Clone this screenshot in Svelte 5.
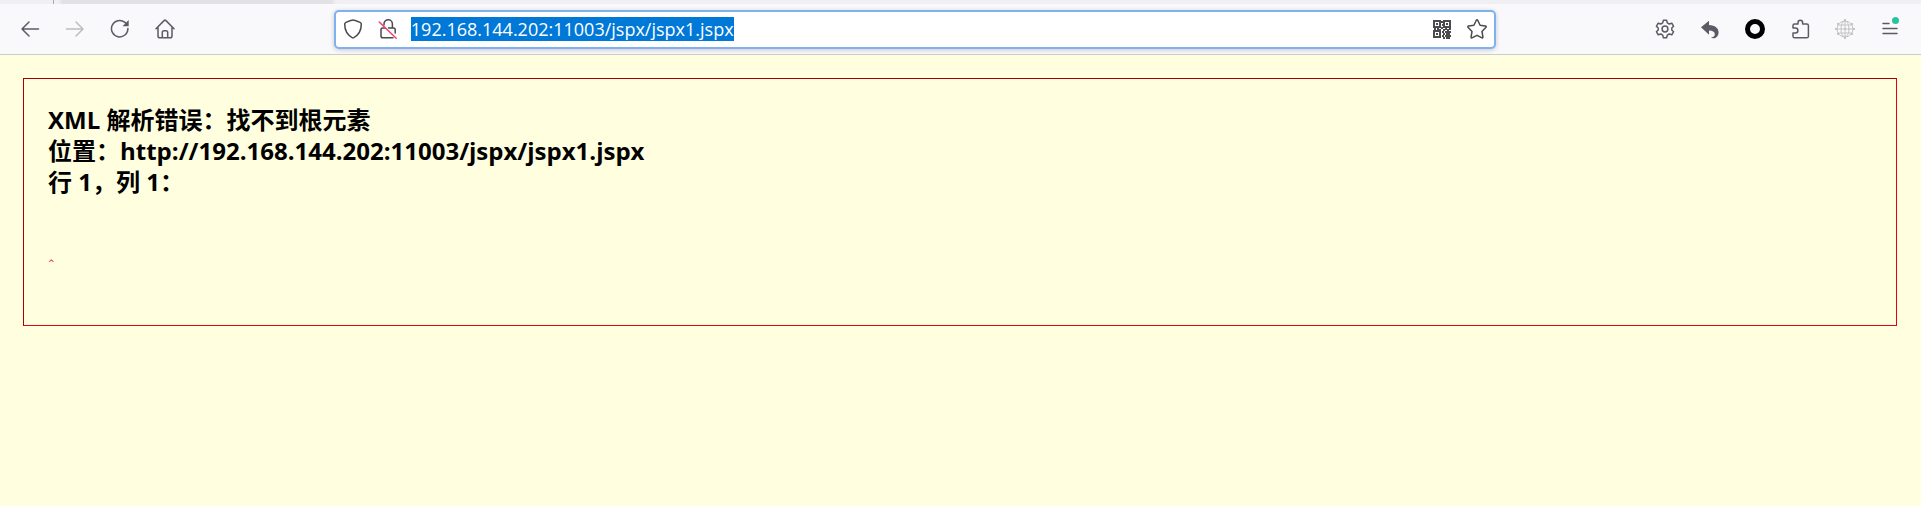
<script>
  import { onMount } from 'svelte';

  let address = $state('192.168.144.202:11003/jspx/jspx1.jspx');
  let field;

  // modules of the QR glyph that lie outside the three finder squares
  const dots = [
    [8, 1], [9, 4], [8, 7], [1, 8], [4, 8], [6, 9], [10, 9], [12, 8], [14, 9],
    [16, 8], [9, 11], [12, 11], [14, 11], [16, 11], [10, 13], [13, 13], [15, 13],
    [9, 15], [12, 15], [14, 15], [16, 15], [10, 17], [13, 17], [15, 17]
  ];

  onMount(() => {
    field.focus();
    field.select();
  });
</script>

<div class="tabs"><span class="divider"></span><span class="tab"></span></div>

<nav class="toolbar">
  <div class="group">
    <button aria-label="Back">
      <svg viewBox="0 0 20 20"><path d="M18.5 10H2M9 3L2 10l7 7" /></svg>
    </button>
    <button aria-label="Forward" class="off">
      <svg viewBox="0 0 20 20"><path d="M1.5 10H18M11 3l7 7-7 7" /></svg>
    </button>
    <button aria-label="Reload">
      <svg viewBox="0 0 20 20"><path d="M17.9 9.6A8.2 8.2 0 1 1 14.6 3.1L17 5.2" /><path class="solid" d="M18.7 1v6.2h-6.2z" /></svg>
    </button>
    <button aria-label="Home">
      <svg viewBox="0 0 20 20"><path d="M1 9.7L9.3 1.4q.7-.6 1.4 0L19 9.7M3 8.2v8.8q0 1.8 1.8 1.8h10.4q1.8 0 1.8-1.8V8.2M7.3 18.5v-5q0-1.8 1.7-1.8h2q1.7 0 1.7 1.8v5" /></svg>
    </button>
  </div>

  <div class="space"></div>

  <div class="address">
    <button aria-label="Tracking protection">
      <svg viewBox="0 0 20 20"><path d="M10 1.1Q11 1.1 17 3.4q1.3.5 1.3 1.7C18.3 12 15 16.4 10.8 18.7q-.8.4-1.6 0C5 16.4 1.7 12 1.7 5.1q0-1.2 1.3-1.7Q9 1.1 10 1.1z" /></svg>
    </button>
    <button aria-label="Connection not secure">
      <svg viewBox="0 0 20 20"><path d="M6 6V5a4.2 4.2 0 0 1 8.4 0v4h1.2q1.6 0 1.6 1.6V14M10.5 9H14M7 9H4.6Q3 9 3 10.6V17q0 1.8 1.8 1.8H15" /><path class="slash" d="M1.2 3l17 16.2" /></svg>
    </button>
    <input bind:this={field} bind:value={address} aria-label="Address" type="text" spellcheck="false" />
    <button aria-label="QR code">
      <svg viewBox="0 0 20 20">
        <path class="finder" d="M2 2h6v6H2zM12 2h6v6h-6zM2 12h6v6H2z" />
        <path class="solid" d="M4 4h2v2H4zM14 4h2v2h-2zM4 14h2v2H4z" />
        {#each dots as [x, y]}<rect class="solid" x={x + 1} y={y + 1} width="2" height="2" />{/each}
      </svg>
    </button>
    <button aria-label="Bookmark">
      <svg viewBox="0 0 20 20"><path d="M9.2 1.5q.8-1.3 1.6 0l2.3 4.8 5.2.8q1.5.3.5 1.5L15 12.5l.9 5.3q.1 1.6-1.3.9L10 16.300l-4.600 2.400q-1.400.7-1.300-.9l.9-5.300L1.200 8.600q-1-1.200.5-1.500l5.200-.8z" /></svg>
    </button>
  </div>

  <div class="space"></div>

  <div class="group">
    <button aria-label="Settings">
      <svg viewBox="0 0 20 20"><path d="M8.4 1.2h3.2l.7 2.7 1.9 1.1 2.6-.8 1.8 3.1L16.8 9v2l1.8 1.7-1.8 3.1-2.6-.8-1.9 1.1-.7 2.7H8.400l-.7-2.7L5.800 15l-2.600.8-1.800-3.100L3.200 11V9L1.400 7.300l1.800-3.100 2.600.8 1.900-1.100z" /><circle cx="10" cy="10" r="2.9" /></svg>
    </button>
    <button aria-label="Undo">
      <svg viewBox="0 0 20 20"><path class="solid" d="M9 1.8v4.100c6 .1 9.600 3.300 9.600 7.600 0 2.400-1.400 4.600-3.300 5.400-2.600.5-4 .2-4-.3 2.600-.6 3.700-1.800 3.500-3.600-.2-2-2.200-3.300-5.800-3.400v4.200L1 8.300z" /></svg>
    </button>
    <button aria-label="Proxy">
      <svg viewBox="0 0 20 20"><circle class="ring" cx="10" cy="10" r="7.5" /></svg>
    </button>
    <button aria-label="Extensions">
      <svg viewBox="0 0 20 20"><path d="M3 9V6.500Q3 5 4.500 5H8V3.500a2.300 2.300 0 0 1 4.600 0V5h4.200q1.600 0 1.600 1.600v10.600q0 1.600-1.600 1.600H4.600Q3 18.800 3 17.200V14h2.400a2.500 2.500 0 0 0 0-5z" /></svg>
    </button>
    <button aria-label="Network" class="faint">
      <svg viewBox="0 0 20 20"><circle cx="10" cy="10" r="8" /><ellipse cx="10" cy="10" rx="4" ry="8" /><path d="M10 1v18M1 10h18M3 6h14M3 14h14" /><path class="solid" d="M9 0h2v2H9zM9 18h2v2H9zM2 4h2v2H2zM16 4h2v2h-2zM2 14h2v2H2zM16 14h2v2h-2zM9 9h2v2H9zM0 9h2v2H0zM18 9h2v2h-2z" /></svg>
    </button>
    <button aria-label="Menu">
      <svg viewBox="0 0 20 20"><path d="M3 4.500h6M3 9.500h14M3 14.500h14" /></svg>
      <span class="badge"></span>
    </button>
  </div>
</nav>

<main>
  <p>XML 解析错误：找不到根元素<br />位置：http://192.168.144.202:11003/jspx/jspx1.jspx<br />行 1，列 1：</p>
  <pre>^</pre>
</main>

<style>
  :global(body) {
    margin: 0;
    background: #ffffdf;
    font-family: "Open Sans", "Noto Sans CJK SC", sans-serif;
  }
  .tabs {
    display: flex;
    height: 4px;
    overflow: hidden;
    background: #f0f0f4;
  }
  .divider {
    width: 1px;
    margin: 0 8px 0 53px;
    background: #aaaab2;
  }
  .tab {
    width: 270px;
    background: #e2e2e6;
    box-shadow: 0 0 4px #bbbbc2;
  }
  .toolbar {
    display: flex;
    align-items: center;
    box-sizing: border-box;
    height: 51px;
    padding: 0 9px 0 7px;
    background: #f9f9fb;
    border-bottom: 1px solid #cccccc;
  }
  .group {
    display: flex;
  }
  .space {
    flex: 1;
  }
  button {
    position: relative;
    display: flex;
    align-items: center;
    justify-content: center;
    flex: none;
    width: 45px;
    height: 35px;
    padding: 0;
    border: 0;
    background: none;
    color: #5b5b66;
  }
  .off {
    color: #bdbdc0;
  }
  .faint {
    color: #c4c4c6;
  }
  svg {
    width: 20px;
    height: 20px;
    fill: none;
    stroke: currentColor;
    stroke-width: 1.5;
    stroke-linecap: round;
    stroke-linejoin: round;
  }
  .faint svg {
    stroke-width: 1;
  }
  .solid {
    fill: currentColor;
    stroke: none;
  }
  .slash {
    stroke: #f0426a;
  }
  .finder {
    stroke-width: 2;
    stroke-linejoin: miter;
  }
  .ring {
    stroke: #000000;
    stroke-width: 5;
  }
  .badge {
    position: absolute;
    top: 5px;
    right: 13px;
    width: 7px;
    height: 7px;
    border-radius: 50%;
    background: #2ac3a2;
  }
  .address {
    display: flex;
    align-items: center;
    flex: 8;
    box-sizing: border-box;
    height: 39px;
    min-width: 0;
    margin: 0 1px 0 2px;
    border: 2px solid #7db1f0;
    border-radius: 5px;
    background: #ffffff;
    box-shadow: 0 1px 4px #c4c4cc;
  }
  .address button {
    width: 35px;
    color: #4a4a4f;
  }
  input {
    flex: 1;
    min-width: 0;
    height: 24px;
    margin: 0 0 0 5px;
    padding: 0;
    border: 0;
    outline: 0;
    background: none;
    color: #15141a;
    font-family: "Open Sans", sans-serif;
    font-size: 18px;
    line-height: 22px;
  }
  input::selection {
    background: #0078d7;
    color: #ffffff;
  }
  main {
    margin: 23px 24px 23px 23px;
    padding: 25px 24px 24px;
    border: 1px solid;
    border-color: #a80000 #e60012 #e60012 #a80000;
  }
  p {
    margin: 0;
    color: #000000;
    font-size: 24px;
    font-weight: 700;
    line-height: 31px;
  }
  pre {
    margin: 63px 0 33px;
    color: #e60012;
    font: 8px/8px "DejaVu Sans", sans-serif;
  }
</style>
